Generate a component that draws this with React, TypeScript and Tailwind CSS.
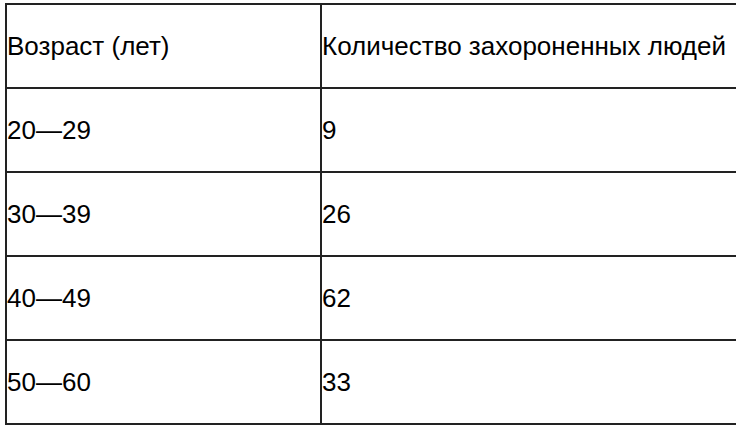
import React from 'react';

const rows: [string, string][] = [
  ['20—29', '9'],
  ['30—39', '26'],
  ['40—49', '62'],
  ['50—60', '33'],
];

export default function App() {
  return (
    <div className="w-[736px] h-[430px] overflow-hidden bg-white pl-[5px] pt-[3px] font-['Liberation_Sans',Arial,sans-serif] text-[26px] text-black">
      <table className="border-collapse w-[780px] table-fixed">
        <colgroup>
          <col className="w-[315px]" />
          <col />
        </colgroup>
        <tbody>
          <tr className="h-[84px]">
            <td className="border-2 border-[#222] p-0 align-middle leading-none">Возраст (лет)</td>
            <td className="border-2 border-[#222] p-0 align-middle leading-none whitespace-nowrap">
              Количество захороненных людей
            </td>
          </tr>
          {rows.map(([age, count]) => (
            <tr key={age} className="h-[84px]">
              <td className="border-2 border-[#222] p-0 align-middle leading-none">{age}</td>
              <td className="border-2 border-[#222] p-0 align-middle leading-none">{count}</td>
            </tr>
          ))}
        </tbody>
      </table>
    </div>
  );
}
